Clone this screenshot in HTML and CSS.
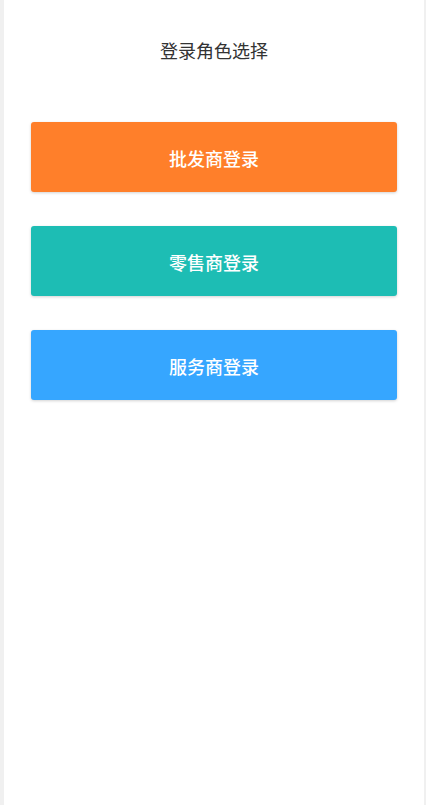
FILE: index.html
```html
<!DOCTYPE html>
<html lang="zh">
<head>
<meta charset="utf-8">
<title>登录角色选择</title>
<link rel="stylesheet" href="styles.css">
</head>
<body>
<div class="page">
  <header class="header">
    <h1 class="title">登录角色选择</h1>
  </header>
  <main class="roles">
    <button class="role role-wholesale">批发商登录</button>
    <button class="role role-retail">零售商登录</button>
    <button class="role role-service">服务商登录</button>
  </main>
</div>
</body>
</html>
```
FILE: styles.css
```css
html, body {
  margin: 0;
  padding: 0;
  background: #f0f0f0;
}
body {
  font-family: "Noto Sans CJK SC", "Noto Sans", sans-serif;
}
.page {
  margin: 0 2px 0 4px;
  background: #ffffff;
  min-height: 805px;
}
.header {
  padding: 38px 0 60px;
}
.title {
  margin: 0;
  font-size: 18px;
  line-height: 24px;
  font-weight: 400;
  color: #333333;
  text-align: center;
}
.roles {
  display: flex;
  flex-direction: column;
  gap: 34px;
  padding: 0 27px;
}
.role {
  display: block;
  width: 100%;
  height: 70px;
  border: none;
  border-radius: 3px;
  box-shadow: 0 1px 3px rgba(0, 0, 0, 0.18);
  color: #ffffff;
  font-family: "Noto Sans CJK SC", "Noto Sans", sans-serif;
  font-size: 18px;
  font-weight: 500;
  padding: 2px 0 0;
  cursor: pointer;
}
.role-wholesale { background: #ff7f2a; }
.role-retail { background: #1dbdb4; }
.role-service { background: #36a6ff; }
```
